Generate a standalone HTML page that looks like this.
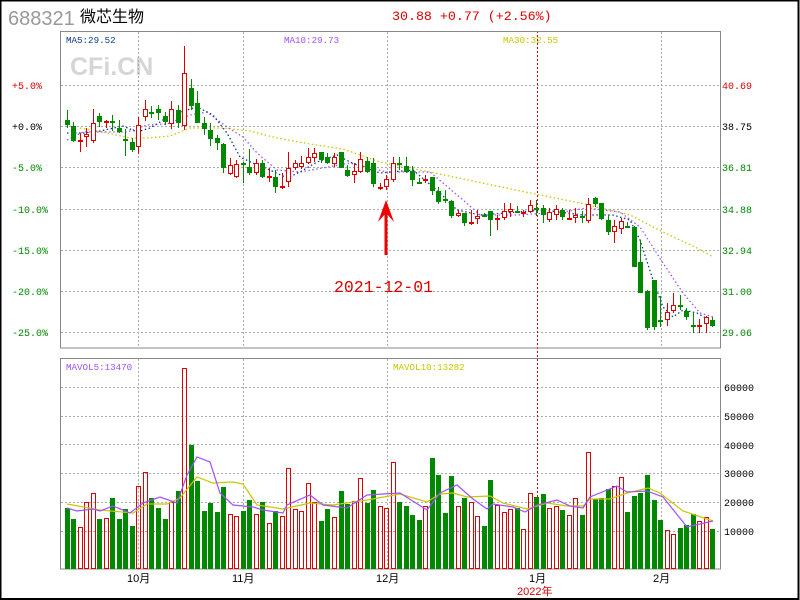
<!DOCTYPE html>
<html><head><meta charset="utf-8"><style>
body{margin:0;background:#fff}
#c{position:relative;width:800px;height:600px;overflow:hidden;background:#fff}
</style></head><body><div id="c">
<svg id="s" width="800" height="600" xmlns="http://www.w3.org/2000/svg" font-family="Liberation Mono, monospace">
<rect x="0.5" y="0.5" width="798" height="598.5" fill="none" stroke="#000" stroke-width="2"/>
<text x="8" y="25" font-family="Liberation Sans, sans-serif" font-size="20" fill="#999">688321</text>
<text x="80" y="22" font-family="Liberation Sans, 'Noto Sans CJK SC', sans-serif" font-size="16" fill="#000">微芯生物</text>
<text x="392" y="20" font-size="13.3" fill="#d00">30.88 +0.77 (+2.56%)</text>
<text x="70" y="75" font-family="Liberation Sans, sans-serif" font-weight="bold" font-size="25" fill="#d6d6d6">CFi.CN</text>
<g id="grid" stroke="#aaa" stroke-dasharray="2,2" stroke-width="1"></g>
<line x1="537.5" y1="31" x2="537.5" y2="569" stroke="#d00" stroke-dasharray="2,2"/>
<rect x="60.5" y="31.5" width="660" height="316.5" fill="none" stroke="#888"/>
<rect x="60.5" y="358.5" width="660" height="210.5" fill="none" stroke="#888"/>
<g id="ma"></g>
<g id="k"></g>
<text x="66" y="43" font-size="9.2" fill="#0a3c8c">MA5:29.52</text>
<text x="284" y="43" font-size="9.2" fill="#a050ff">MA10:29.73</text>
<text x="503" y="43" font-size="9.2" fill="#c8c800">MA30:32.55</text>
<text x="66" y="370" font-size="9.2" fill="#a050ff">MAVOL5:13470</text>
<text x="393" y="370" font-size="9.2" fill="#c8c800">MAVOL10:13282</text>
<g font-size="10">
<text x="12" y="89" fill="#d00">+5.0%</text>
<text x="12" y="130" fill="#000">+0.0%</text>
<text x="12" y="171" fill="#080">-5.0%</text>
<text x="12" y="213" fill="#080">-10.0%</text>
<text x="12" y="254" fill="#080">-15.0%</text>
<text x="12" y="295" fill="#080">-20.0%</text>
<text x="12" y="336" fill="#080">-25.0%</text>
<text x="722" y="89" fill="#d00">40.69</text>
<text x="722" y="130" fill="#000">38.75</text>
<text x="722" y="171" fill="#080">36.81</text>
<text x="722" y="213" fill="#080">34.88</text>
<text x="722" y="254" fill="#080">32.94</text>
<text x="722" y="295" fill="#080">31.00</text>
<text x="722" y="336" fill="#080">29.06</text>
<text x="724" y="391" fill="#000">60000</text>
<text x="724" y="420" fill="#000">50000</text>
<text x="724" y="449" fill="#000">40000</text>
<text x="724" y="477" fill="#000">30000</text>
<text x="724" y="506" fill="#000">20000</text>
<text x="724" y="535" fill="#000">10000</text>
</g>
<g font-family="Liberation Sans, 'Noto Sans CJK SC', sans-serif" font-size="11">
<text x="127" y="582" fill="#000">10月</text>
<text x="232" y="582" fill="#000">11月</text>
<text x="376" y="582" fill="#000">12月</text>
<text x="529" y="582" fill="#000">1月</text>
<text x="653" y="582" fill="#000">2月</text>
<text x="517" y="595" fill="#d00">2022年</text>
</g>
<text x="334" y="292" font-size="16.5" fill="#d00">2021-12-01</text>
<line x1="386" y1="207" x2="386" y2="255" stroke="#e00" stroke-width="3"/>
<polygon points="386,200 378,222 386,213 394,222" fill="#e00"/>
</svg></div>
<script>
var NS="http://www.w3.org/2000/svg";
function el(p,t,a){var e=document.createElementNS(NS,t);for(var k in a)e.setAttribute(k,a[k]);p.appendChild(e);return e;}
var g=document.getElementById('grid');
[85,126,167,209,250,291,332].forEach(function(y){el(g,'line',{x1:61,y1:y+.5,x2:720,y2:y+.5});});
[387.5,416.5,444.5,473.5,502.5,531.5].forEach(function(y){el(g,'line',{x1:61,y1:y,x2:720,y2:y});});
[138.5,243.5,387.5,661.5].forEach(function(x){el(g,'line',{x1:x,y1:32,x2:x,y2:347});el(g,'line',{x1:x,y1:359,x2:x,y2:568});});
// candles: [c, top, bot, wt, wb]
var K=[
['g',120,125,110,128],['g',126,141,122,142],['r',140,141,133,152],['r',134,137,128,147],['r',123,141,109,143],['g',116,122,113,127],['r',121,121,120,128],['g',121,121,115,131],['g',128,132,120,133],['g',139,139,129,156],['g',142,150,138,152],['r',125,147,117,154],
['r',109,117,100,121],['g',112,112,106,118],['g',109,113,105,120],['g',116,122,112,125],['r',109,124,101,129],['g',110,123,105,128],['r',73,126,46,130],['g',88,106,79,110],['g',103,123,91,123],['g',123,129,117,135],['g',130,139,123,146],['g',138,143,135,150],['g',144,168,143,173],['r',165,174,158,175],['r',164,177,160,178],['g',163,163,162,183],['g',167,173,149,175],['r',163,173,159,175],['g',163,177,160,178],['r',176,176,168,182],['g',177,187,170,193],['r',186,186,173,189],['r',168,182,152,187],['r',163,168,160,170],['r',163,167,156,169],['r',157,163,148,164],['r',153,158,148,162],['g',152,160,152,163],['g',157,163,153,164],['r',157,164,153,167],['g',152,168,152,168],['g',170,176,165,177],['r',171,175,163,183],['r',159,172,152,173],['g',161,172,157,173],['g',163,184,158,187],['r',187,187,183,190],['r',179,187,175,190],['r',163,180,157,182],
['g',163,163,157,170],['g',166,172,157,173],['g',171,180,166,186],['g',182,182,178,184],['r',179,181,175,183],['g',177,191,177,195],['g',191,202,187,204],['g',199,199,190,203],['g',201,216,200,218],['r',213,216,210,217],['g',213,223,213,226],['r',222,224,210,225],['r',216,219,210,224],['g',215,215,213,217],['g',211,220,211,236],['r',218,220,215,230],['r',211,218,203,220],['r',209,212,203,217],['g',211,211,206,213],['r',212,213,210,217],['r',205,212,200,213],['g',208,208,200,216],['g',208,215,205,223],['r',212,220,208,222],['r',209,215,205,220],['g',210,217,208,220],['r',218,218,210,220],['r',215,218,208,223],['g',216,216,211,223],['r',204,221,198,223],['g',198,204,197,207],['g',203,219,203,220],['g',220,232,215,235],['r',226,232,220,243],['r',221,229,218,234],['g',226,226,222,228],['g',227,267,226,267],['g',262,293,240,293],['g',291,328,290,330],['g',280,327,280,330],['g',320,320,296,327],['r',312,320,303,326],['r',305,311,293,313],['g',305,305,295,310],['g',311,317,308,320],['g',325,325,312,333],['r',325,325,319,333],['r',317,324,316,333],['g',320,326,317,327]];
var V=[['g',508],['g',519],['r',527],['r',502],['r',493],['g',519],['r',518],['g',498],['g',519],['g',509],['g',526],['r',486],['r',472],['g',498],['g',508],['g',519],['r',502],['g',491],['r',368],['g',445],['g',481],['g',511],['g',503],['g',512],['g',487],['r',514],['r',516],['g',511],['g',500],['r',514],['g',502],['r',523],['g',511],['r',516],['r',468],['r',509],['r',511],['r',483],['r',502],['g',521],['g',509],['r',517],['g',491],['g',504],['r',501],['r',478],['g',503],['g',490],['r',506],['r',508],['r',462],['g',502],
['g',506],['g',515],['g',520],['r',506],['g',458],['g',475],['g',513],['g',476],['r',506],['g',498],['r',502],['r',516],['g',526],['g',480],['r',505],['r',512],['r',509],['g',508],['r',529],['r',493],['g',497],['g',494],['r',508],['r',506],['g',510],['r',515],['r',498],['g',515],['r',452],['g',499],['g',498],['g',489],['r',486],['r',477],['g',512],['g',496],['g',493],['g',475],['g',500],['g',520],['r',530],['r',534],['g',528],['g',525],['g',514],['r',521],['r',517],['g',529]];
var k=document.getElementById('k');
var RED='#d00',GR='#080';
for(var i=0;i<K.length;i++){var c=K[i],x=Math.round(66.7+i*6.52),col=c[0]=='r'?RED:GR;
 el(k,'line',{x1:x+.5,y1:c[3],x2:x+.5,y2:c[4],stroke:col});
 var h=c[2]-c[1];
 if(h<2){el(k,'rect',{x:x-2,y:c[1],width:5,height:2,fill:col});}
 else if(c[0]=='r'){el(k,'rect',{x:x-1.5,y:c[1]+.5,width:4,height:h-1,fill:'#fff',stroke:col});}
 else el(k,'rect',{x:x-2,y:c[1],width:5,height:h,fill:col});}
for(var i=0;i<V.length;i++){var c=V[i],x=Math.round(66.7+i*6.52),col=c[0]=='r'?RED:GR;
 if(c[0]=='r')el(k,'rect',{x:x-1.5,y:c[1]+.5,width:4,height:568-c[1],fill:'none',stroke:col});
 else el(k,'rect',{x:x-2,y:c[1],width:5,height:569-c[1],fill:col});}
var m=document.getElementById('ma');
function pl(p,col,dash,w){el(m,'polyline',{points:p,fill:'none',stroke:col,'stroke-width':w||1.3,'stroke-dasharray':dash||''});}
pl("80,128 103,132 130,138 147,138 170,136 190,128 223,128 250,131 277,138 310,144 343,149 380,162 430,172 530,193 580,203 630,215 663,232 697,248 713,257",'#c8c800','1.5,2.5');
pl("67,140 83,132 100,132 127,132 147,125 167,124 190,115 207,112 227,127 243,137 257,153 277,170 300,172 317,169 350,163 387,172 430,172 463,200 480,215 517,215 563,212 587,208 620,212 640,227 663,263 683,293 700,313 713,317",'#a050ff','1.5,2.5');
pl("67,133 83,133 100,131 123,126 137,132 150,128 160,122 170,115 197,107 213,115 227,133 240,157 257,165 270,170 287,178 300,172 317,162 337,155 350,162 380,173 413,170 440,193 457,210 480,215 517,212 543,210 583,215 613,215 630,220 640,240 653,280 663,307 673,317 683,310 697,313 713,322",'#0a3c8c','1.5,2.5');
var vm=document.createElementNS(NS,'g');document.getElementById('s').appendChild(vm);m=vm;
pl("67,504 100,510 133,513 147,504 167,504 180,498 197,477 213,483 233,482 243,484 257,505 283,509 310,503 333,505 367,500 400,494 427,502 440,494 453,493 467,497 490,496 503,503 527,509 547,503 567,506 583,506 590,499 610,499 627,493 648,488 660,493 683,511 713,521",'#c8c800','',1.2);
pl("67,508 77,511 93,509 100,511 113,506 130,513 143,503 160,497 177,503 187,475 197,457 210,462 220,493 233,505 253,507 263,510 283,513 287,505 310,495 323,505 347,508 367,495 400,493 427,510 440,493 457,485 473,499 487,509 493,504 513,507 525,512 537,505 557,500 570,506 583,508 590,497 617,486 627,492 647,491 663,497 687,527 713,521",'#a050ff','',1.2);
</script>
</body></html>
